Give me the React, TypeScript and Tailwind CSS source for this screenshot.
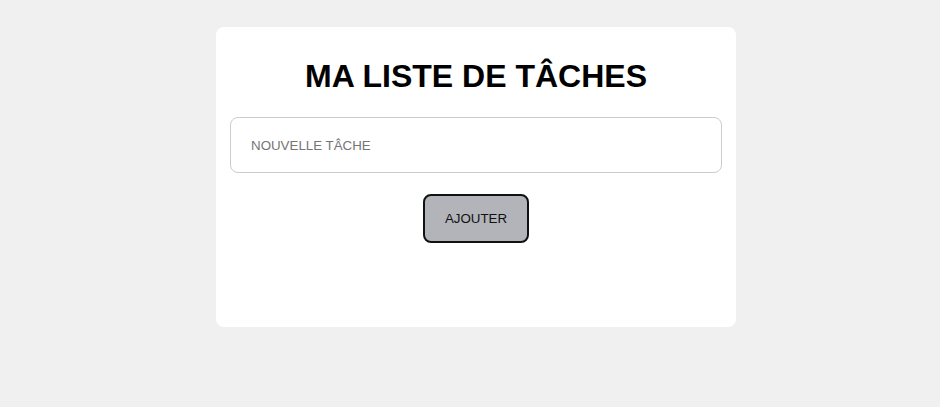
export default function App() {
  return (
    <div className="flex min-h-[407px] w-full justify-center bg-[#f0f0f0] pl-3 pt-[27px]" style={{ fontFamily: '"Liberation Sans", Arial, sans-serif' }}>
      <div className="flex h-[300px] w-[520px] flex-col items-center rounded-lg bg-white px-[14px] pt-[31px]">
        <h1 className="text-[32px] font-bold leading-[37px] text-black">MA LISTE DE TÂCHES</h1>
        <input
          type="text"
          placeholder="NOUVELLE TÂCHE"
          className="mt-[22px] h-[56px] w-full rounded-lg border border-[#cccccc] px-5 text-[13.333px] uppercase text-black outline-none placeholder:text-[#757575]"
        />
        <button className="mt-[21px] h-[49px] w-[106px] rounded-lg border-2 border-[#111] bg-[#b2b4b9] text-[13.333px] text-[#111]">
          AJOUTER
        </button>
      </div>
    </div>
  );
}
